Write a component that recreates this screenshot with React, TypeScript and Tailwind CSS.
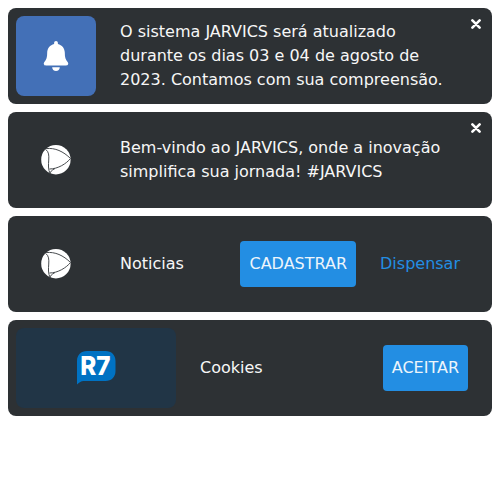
import type { ReactNode } from "react";

function Card({ icon, children }: { icon: ReactNode; children: ReactNode }) {
  return (
    <section className="relative flex h-24 items-center rounded-lg bg-[#2d3134] p-2 text-base leading-6 text-[#f7f7f7]">
      {icon}
      {children}
    </section>
  );
}

function CloseButton() {
  return (
    <button aria-label="Fechar" className="absolute top-[11px] right-[11px] h-[10px] w-[10px]">
      <svg viewBox="0 0 10 10" className="block h-[10px] w-[10px]">
        <path d="M1.400 1.400 8.600 8.600M8.600 1.400 1.400 8.600" stroke="#fff" strokeWidth="2.600" strokeLinecap="round" />
      </svg>
    </button>
  );
}

function BellIcon() {
  return (
    <svg viewBox="0 0 80 80" className="h-20 w-20 shrink-0 rounded-lg bg-[#4370b7]">
      <path
        fill="#fff"
        d="M40 25c1.100 0 1.900.8 1.900 1.900v1c4 .9 6.900 4.400 6.900 8.700 0 4.700.7 7.100 3 9.700.5.600.6 1.200.3 1.900-.3.800-1 1.200-1.900 1.200H29.800c-.9 0-1.600-.4-1.900-1.200-.3-.7-.2-1.300.3-1.900 2.300-2.600 3-5 3-9.700 0-4.300 2.900-7.800 6.900-8.700v-1c0-1.100.8-1.900 1.900-1.900Z"
      />
      <path fill="#fff" d="M36.200 51.300h7.600c0 2.200-1.600 3.700-3.800 3.700s-3.800-1.500-3.800-3.700Z" />
    </svg>
  );
}

function GlobeIcon() {
  return (
    <svg viewBox="0 0 80 80" className="h-20 w-20 shrink-0">
      <circle cx="39.900" cy="39.700" r="14.700" fill="#fff" />
      <path
        d="M30 28.600C39 27.500 47.500 31.500 54.500 38.500M29.500 29.300C36.500 34 29.500 45 34.300 54M54.500 38.500C50.500 43.500 42 49 33.500 49M34.300 54C34.100 51.500 35.500 50.500 39 48.500"
        fill="none"
        stroke="#484c4f"
        strokeWidth="1"
      />
    </svg>
  );
}

function R7Logo() {
  return (
    <svg viewBox="0 0 160 80" className="h-20 w-40 shrink-0 rounded-lg bg-[#213546]">
      <path fill="#0072c3" d="M71 23h18.500c6 0 10 4 10 10v10c0 6-4 10-10 10H67.500c-2.500 0-4 1.500-6.500 3.500V33c0-6 4-10 10-10Z" />
      <text x="64.300" y="47.200" fill="#fff" textLength="30.300" lengthAdjust="spacingAndGlyphs" className="font-['Inter',sans-serif] text-[26px] font-extrabold">R7</text>
    </svg>
  );
}

function ActionButton({ children }: { children: ReactNode }) {
  return <button className="h-[46px] rounded bg-[#238ee3] px-[9px] text-[#edf5fb]">{children}</button>;
}

export default function App() {
  return (
    <main className="flex flex-col gap-2 p-2 font-['DejaVu_Sans',sans-serif]">
      <Card icon={<BellIcon />}>
        <p className="mx-6 flex-1">O sistema JARVICS será atualizado durante os dias 03 e 04 de agosto de 2023. Contamos com sua compreensão.</p>
        <CloseButton />
      </Card>
      <Card icon={<GlobeIcon />}>
        <p className="mx-6 flex-1">Bem-vindo ao JARVICS, onde a inovação simplifica sua jornada! #JARVICS</p>
        <CloseButton />
      </Card>
      <Card icon={<GlobeIcon />}>
        <p className="ml-6 flex-1">Noticias</p>
        <ActionButton>CADASTRAR</ActionButton>
        <button className="mr-6 ml-6 text-[#238ee3]">Dispensar</button>
      </Card>
      <Card icon={<R7Logo />}>
        <p className="ml-6 flex-1">Cookies</p>
        <div className="mr-4 flex">
          <ActionButton>ACEITAR</ActionButton>
        </div>
      </Card>
    </main>
  );
}
